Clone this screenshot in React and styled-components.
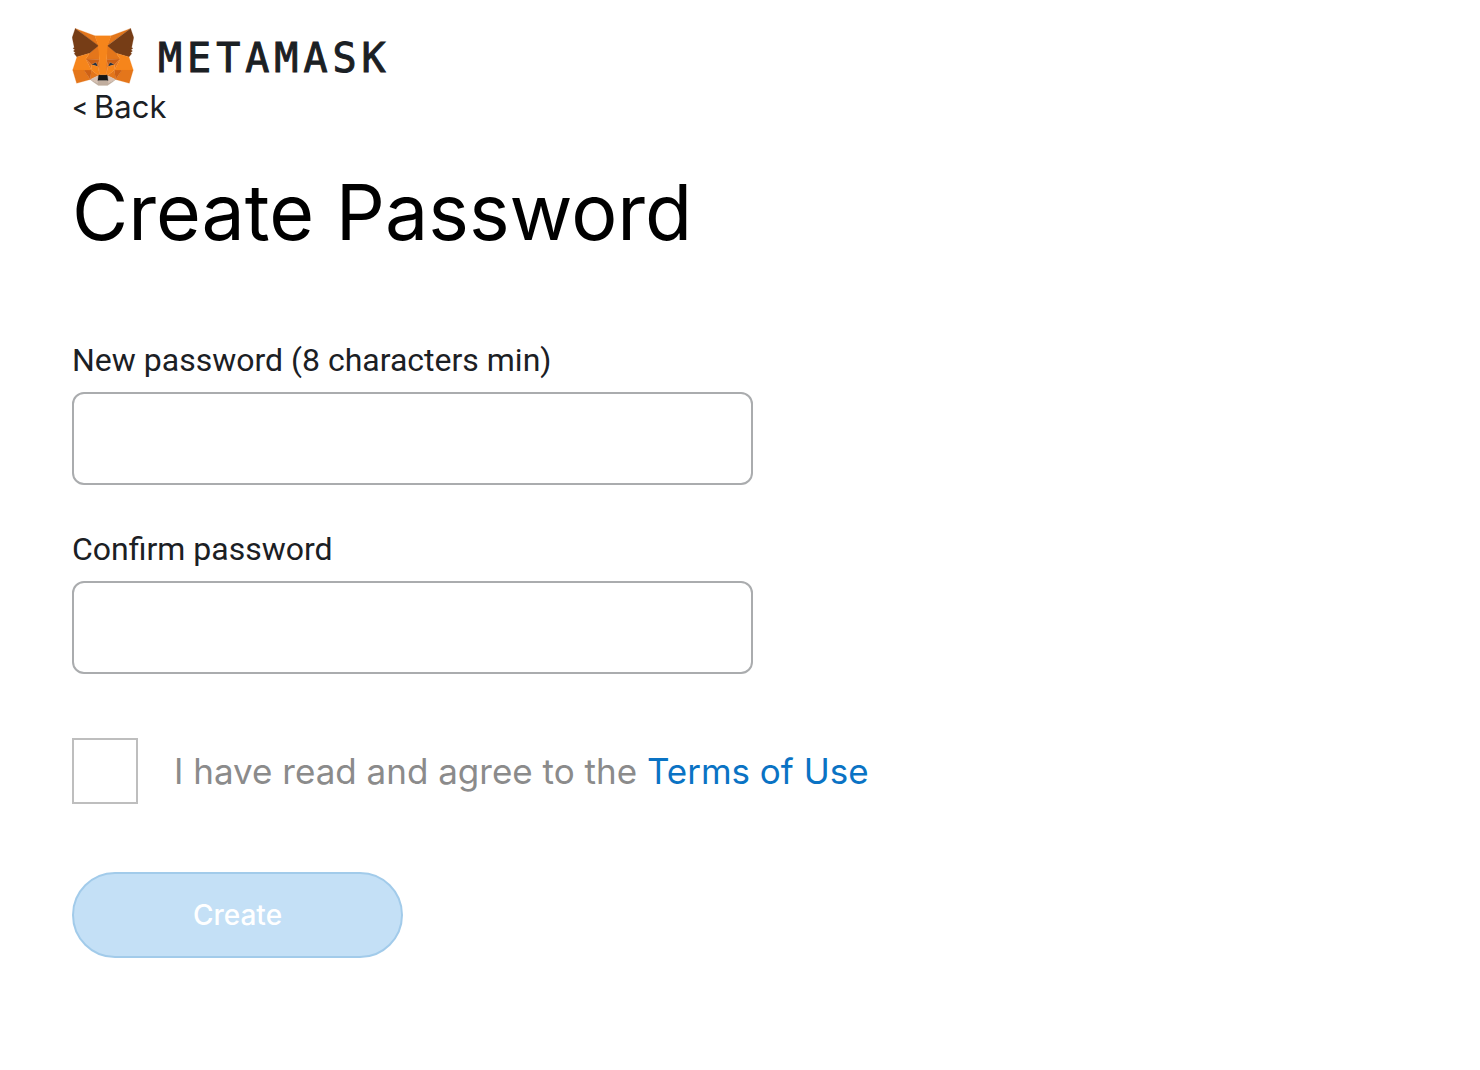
import React from 'react';
import styled, { createGlobalStyle } from 'styled-components';

const C_INK = '#1b2024';
const C_GREY = '#8b8b8b';
const C_LINK = '#0a73c4';
const C_BORDER = '#aaacae';

const SANS = 'Inter, "Liberation Sans", sans-serif';
const LABEL_SANS = 'Roboto, "Liberation Sans", sans-serif';

const GlobalStyle = createGlobalStyle`
  *,
  *::before,
  *::after {
    box-sizing: border-box;
  }

  body {
    margin: 0;
    background: #fff;
    color: ${C_INK};
    font-family: ${SANS};
  }
`;

const Page = styled.main`
  padding: 28px 72px;
`;

const Brand = styled.div`
  display: flex;
  align-items: flex-start;
  gap: 24px;
`;

const Fox = styled.svg`
  display: block;
  width: 62px;
  height: 58px;
`;

const Wordmark = styled.span`
  font-family: 'DejaVu Sans Mono', monospace;
  font-size: 40px;
  line-height: 60px;
  letter-spacing: 5px;
  -webkit-text-stroke: 1px ${C_INK};
`;

const BackLink = styled.a`
  display: inline-flex;
  align-items: center;
  gap: 6px;
  color: ${C_INK};
  font-size: 31px;
  line-height: 38px;
  text-decoration: none;
`;

const BackArrow = styled.span`
  font-size: 24px;
  font-weight: 500;
`;

const Title = styled.h1`
  margin: 38px 0 76px;
  color: #000;
  font-size: 77px;
  font-weight: 400;
  line-height: 96px;
`;

const Form = styled.form`
  display: flex;
  flex-direction: column;
  align-items: flex-start;
`;

const Field = styled.div`
  width: 100%;
  max-width: 681px;
  margin-bottom: 40px;
`;

const Label = styled.label`
  display: block;
  margin-bottom: 8px;
  font-family: ${LABEL_SANS};
  font-size: 32px;
  line-height: 48px;
`;

const Input = styled.input`
  display: block;
  width: 100%;
  height: 93px;
  padding: 0 28px;
  border: 2px solid ${C_BORDER};
  border-radius: 12px;
  background: #fff;
  color: ${C_INK};
  font-family: ${LABEL_SANS};
  font-size: 32px;
`;

const Terms = styled.div`
  display: flex;
  align-items: center;
  gap: 36px;
  margin: 24px 0 68px;
  color: ${C_GREY};
  font-size: 35px;
  line-height: 48px;
`;

const Checkbox = styled.input`
  flex: none;
  width: 66px;
  height: 66px;
  margin: 0;
  border: 2px solid #bebebe;
  background: #fff;
  appearance: none;

  &:checked {
    background: ${C_LINK};
  }
`;

const TermsLink = styled.a`
  color: ${C_LINK};
  text-decoration: none;

  &:focus,
  &:hover {
    text-decoration: underline;
  }
`;

const SubmitButton = styled.button`
  width: 331px;
  height: 86px;
  border: 2px solid #a2cbea;
  border-radius: 43px;
  background: #c4e0f6;
  color: #fff;
  font-family: ${SANS};
  font-size: 28px;
  font-weight: 500;
`;

const FOX_FACETS = [
  ['#e2761b', '274.1,35.5 174.6,109.4 193,65.8'],
  ['#e4761b', '44.4,35.5 143.1,110.1 125.6,65.8'],
  ['#e4761b', '238.3,206.8 211.8,247.4 268.5,263 284.8,207.7'],
  ['#e4761b', '33.9,207.7 50.1,263 106.8,247.4 80.3,206.8'],
  ['#e4761b', '103.6,138.2 87.8,162.1 144.1,164.6 142.1,104.1'],
  ['#e4761b', '214.9,138.2 175.9,103.4 174.6,164.6 230.8,162.1'],
  ['#e4761b', '106.8,247.4 140.6,230.9 111.4,208.1'],
  ['#e4761b', '177.9,230.9 211.8,247.4 207.1,208.1'],
  ['#d7c1b3', '211.8,247.4 177.9,230.9 180.6,253 180.3,262.3'],
  ['#d7c1b3', '106.8,247.4 138.3,262.3 138.1,253 140.6,230.9'],
  ['#233447', '138.8,193.5 110.6,185.2 130.5,176.1'],
  ['#233447', '179.7,193.5 188,176.1 208,185.2'],
  ['#cd6116', '106.8,247.4 111.6,206.8 80.3,207.7'],
  ['#cd6116', '207,206.8 211.8,247.4 238.3,207.7'],
  ['#cd6116', '230.8,162.1 174.6,164.6 179.8,193.5 188.1,176.1 208.1,185.2'],
  ['#cd6116', '110.6,185.2 130.6,176.1 138.8,193.5 144.1,164.6 87.8,162.1'],
  ['#e4751f', '87.8,162.1 111.4,208.1 110.6,185.2'],
  ['#e4751f', '208.1,185.2 207.1,208.1 230.8,162.1'],
  ['#e4751f', '144.1,164.6 138.8,193.5 145.4,227.6 146.9,182.7'],
  ['#e4751f', '174.6,164.6 171.9,182.6 173.1,227.6 179.8,193.5'],
  ['#f6851b', '179.8,193.5 173.1,227.6 177.9,230.9 207.1,208.1 208.1,185.2'],
  ['#f6851b', '110.6,185.2 111.4,208.1 140.6,230.9 145.4,227.6 138.8,193.5'],
  [
    '#c0ad9e',
    '180.3,262.3 180.6,253 178.1,250.8 140.4,250.8 138.1,253 138.3,262.3 106.8,247.4 117.8,256.4 140.1,271.9 178.4,271.9 200.8,256.4 211.8,247.4',
  ],
  [
    '#161616',
    '177.9,230.9 173.1,227.6 145.4,227.6 140.6,230.9 138.1,253 140.4,250.8 178.1,250.8 180.6,253',
  ],
  [
    '#763d16',
    '278.3,114.2 286.8,73.4 274.1,35.5 177.9,106.9 214.9,138.2 267.2,153.5 278.8,140 273.8,136.4 281.8,129.1 275.6,124.3 283.6,118.2',
  ],
  [
    '#763d16',
    '31.8,73.4 40.3,114.2 34.9,118.2 42.9,124.3 36.8,129.1 44.8,136.4 39.8,140 51.3,153.5 103.6,138.2 140.6,106.9 44.4,35.5',
  ],
  ['#f6851b', '267.2,153.5 214.9,138.2 230.8,162.1 207.1,208.1 238.3,207.7 284.8,207.7'],
  ['#f6851b', '103.6,138.2 51.3,153.5 33.9,207.7 80.3,207.7 111.4,208.1 87.8,162.1'],
  [
    '#f6851b',
    '174.6,164.6 177.9,106.9 193.1,65.8 125.6,65.8 140.6,106.9 144.1,164.6 145.3,182.8 145.4,227.6 173.1,227.6 173.3,182.8',
  ],
];

const FoxLogo = () => (
  <Fox viewBox="31 35 257 238" aria-hidden="true">
    {FOX_FACETS.map(([fill, points]) => (
      <polygon
        key={points}
        points={points}
        fill={fill}
        stroke={fill}
        strokeLinejoin="round"
      />
    ))}
  </Fox>
);

const PasswordField = ({ id, label }) => (
  <Field>
    <Label htmlFor={id}>{label}</Label>
    <Input id={id} type="password" autoComplete="new-password" />
  </Field>
);

const App = () => (
  <>
    <GlobalStyle />
    <Page>
      <Brand>
        <FoxLogo />
        <Wordmark>METAMASK</Wordmark>
      </Brand>
      <BackLink href="#back">
        <BackArrow>&lt;</BackArrow>
        Back
      </BackLink>
      <Title>Create Password</Title>
      <Form onSubmit={e => e.preventDefault()}>
        <PasswordField id="new-password" label="New password (8 characters min)" />
        <PasswordField id="confirm-password" label="Confirm password" />
        <Terms>
          <Checkbox id="terms" type="checkbox" />
          <label htmlFor="terms">
            I have read and agree to the <TermsLink href="#terms">Terms of Use</TermsLink>
          </label>
        </Terms>
        <SubmitButton type="submit" disabled>
          Create
        </SubmitButton>
      </Form>
    </Page>
  </>
);

export default App;
